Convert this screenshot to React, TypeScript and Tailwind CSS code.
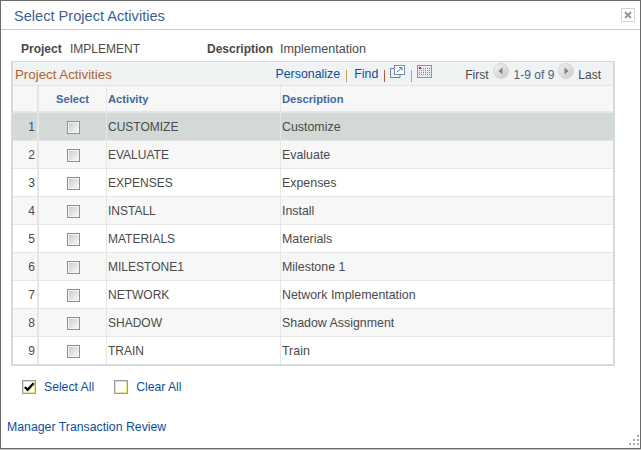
const rows = [
  ["CUSTOMIZE", "Customize"],
  ["EVALUATE", "Evaluate"],
  ["EXPENSES", "Expenses"],
  ["INSTALL", "Install"],
  ["MATERIALS", "Materials"],
  ["MILESTONE1", "Milestone 1"],
  ["NETWORK", "Network Implementation"],
  ["SHADOW", "Shadow Assignment"],
  ["TRAIN", "Train"],
];

function RowCheck() {
  return <div className="w-[13px] h-[13px] mt-[1px] ml-[2px] border border-[#909090] shadow-[inset_0_0_0_1px_#f4f4f4] bg-gradient-to-br from-[#c6caca] to-[#fbfbfb]" />;
}

function NavArrow({ dir }: { dir: "left" | "right" }) {
  return (
    <svg width="16" height="16" viewBox="0 0 16 16" className="mb-[5px]">
      <defs>
        <linearGradient id={`nav-${dir}`} x1="0" y1="0" x2="1" y2="1">
          <stop offset="0" stopColor="#f4f4f4" />
          <stop offset="1" stopColor="#c8c8c8" />
        </linearGradient>
      </defs>
      <circle cx="8" cy="8" r="7.5" fill={`url(#nav-${dir})`} stroke="#d4d4d4" />
      <path d={dir === "left" ? "M5.5 8 L9.5 4.5 V11.5 Z" : "M10.5 8 L6.5 4.5 V11.5 Z"} fill="#808080" />
    </svg>
  );
}

export default function App() {
  return (
    <div className="relative w-[641px] h-[450px] bg-[#c4c4c4] overflow-hidden font-['Liberation_Sans',Arial,sans-serif] text-[12px] text-[#4a4a4a]">
      <div className="w-[641px] h-[449px] bg-white border border-[#6b6b6b] flex flex-col">
        {/* title bar */}
        <div className="h-[29px] shrink-0 border-b border-[#c8c8c8] flex items-center justify-between pl-[13px] pr-[5px]">
          <span className="text-[14.6px] text-[#3d5f96] mt-[3px]">Select Project Activities</span>
          <div className="w-[14px] h-[14px] border border-[#d4d4d4] flex items-center justify-center">
            <svg width="8" height="8" viewBox="0 0 8 8">
              <path d="M1 1 L7 7 M7 1 L1 7" stroke="#8a97a3" strokeWidth="1.8" />
            </svg>
          </div>
        </div>

        {/* project info */}
        <div className="h-[31px] shrink-0 flex items-center pl-[20px] pt-[7px]">
          <span className="font-bold w-[49px]">Project</span>
          <span className="w-[137px]">IMPLEMENT</span>
          <span className="font-bold w-[73px]">Description</span>
          <span className="text-[12.6px] mt-[1px]">Implementation</span>
        </div>

        {/* grid */}
        <div className="ml-[10px] w-[604px] h-[305px] shrink-0 border-2 border-[#d6dadc] border-t-[1px] flex flex-col">
          <div className="h-[24px] shrink-0 bg-[#f0f3f4] flex items-end justify-between border-b border-[#e4e4e4]">
            <span className="text-[13.3px] text-[#b0622c] pl-[2px] leading-[16px] mb-[2px]">Project Activities</span>
            <div className="flex items-end text-[#4a4a4a] pb-[1px]">
              <span className="text-[#0b4f9e] text-[12.4px]">Personalize</span>
              <span className="w-[1px] h-[12px] bg-[#c8a24a] ml-[6px] mr-[7px] mb-[2px]" />
              <span className="text-[#0b4f9e] text-[12.4px]">Find</span>
              <span className="w-[1px] h-[12px] bg-[#b5573a] ml-[6px] mr-[5px] mb-[2px]" />
              <svg width="15" height="13" viewBox="0 0 15 13" className="mb-[6px]">
                <path d="M0.5 3.5 H4 M0.5 3.5 V12.5 H10 V10" fill="none" stroke="#6f7f8f" />
                <rect x="4.5" y="0.5" width="10" height="9" fill="#fff" stroke="#6f90b8" />
                <path d="M7 7 L11.5 3 M9 2.5 H12 V5.5" fill="none" stroke="#5d6f80" />
              </svg>
              <span className="w-[1px] h-[12px] bg-[#c8a24a] ml-[6px] mr-[5px] mb-[2px]" />
              <svg width="15" height="13" viewBox="0 0 15 13" className="mb-[6px]">
                <rect x="0.5" y="0.5" width="14" height="12" fill="#e8ebf0" stroke="#6f9ad0" />
                <path d="M2 3.5 H13 M2 5.5 H13 M2 7.5 H13 M2 9.5 H13" stroke="#8a8f96" />
                <path d="M3.5 2 V11 M5.5 2 V11 M7.5 2 V11 M9.5 2 V11 M11.5 2 V11" stroke="#e8ebf0" />
                <rect x="2" y="2" width="2" height="2" fill="#e8201c" />
              </svg>
              <span className="w-[33px]" />
              <span>First</span>
              <span className="w-[4px]" />
              <NavArrow dir="left" />
              <span className="w-[5px]" />
              <span className="text-[#4d6076]">1-9 of 9</span>
              <span className="w-[4px]" />
              <NavArrow dir="right" />
              <span className="w-[4px]" />
              <span className="pr-[12px]">Last</span>
            </div>
          </div>

          <div className="h-[27px] shrink-0 flex bg-[#f7f7f7] border-b-2 border-[#e6e6e6] font-bold text-[11.2px] text-[#3d6a9e] items-stretch">
            <div className="w-[26px] shrink-0 border-r-2 border-[#e6e6e6]" />
            <div className="w-[68px] shrink-0 border-r border-[#e6e6e6] flex items-center justify-center pt-[1px]">Select</div>
            <div className="w-[174px] shrink-0 border-r border-[#e6e6e6] flex items-center pl-[1px] pt-[1px]">Activity</div>
            <div className="flex-1 flex items-center pl-[1px] pt-[1px]">Description</div>
          </div>

          {rows.map(([activity, description], i) => (
            <div
              key={activity}
              className={`shrink-0 flex items-stretch ${i === 0 ? "bg-[#d3d9d7]" : i % 2 === 1 ? "bg-[#f7f7f7]" : "bg-white"} ${i === 8 ? "h-[27px]" : "h-[28px] border-b border-[#e6e6e6]"}`}
            >
              <div className="w-[26px] shrink-0 border-r-2 border-[#e6e6e6] flex items-center justify-end pr-[2px]">{i + 1}</div>
              <div className="w-[68px] shrink-0 border-r border-[#e6e6e6] flex items-center justify-center">
                <RowCheck />
              </div>
              <div className="w-[174px] shrink-0 border-r border-[#e6e6e6] flex items-center pl-[1px]">{activity}</div>
              <div className="flex-1 flex items-center pl-[1px] pt-[1px] text-[12.4px]">{description}</div>
            </div>
          ))}
        </div>

        {/* select / clear */}
        <div className="h-[41px] shrink-0 flex items-center pl-[21px] text-[#0b4f9e] text-[12.2px]">
          <div className="w-[14px] h-[14px] border border-[#9a9a9a] shadow-[inset_0_0_0_1px_#e8e68c] flex items-center justify-center bg-white">
            <svg width="13" height="12" viewBox="0 0 13 12">
              <path d="M2 6 L5 9 L11.5 2" fill="none" stroke="#000" strokeWidth="2.6" />
            </svg>
          </div>
          <span className="ml-[8px] mt-[1px]">Select All</span>
          <div className="ml-[20px] w-[14px] h-[14px] border border-[#9a9a9a] shadow-[inset_0_0_0_1px_#e8e68c] bg-white" />
          <span className="ml-[8px] mt-[1px]">Clear All</span>
        </div>

        <div className="pl-[6px] mt-[11px] text-[#0b4f9e] text-[12.3px]">Manager Transaction Review</div>
      </div>

      {/* resize grip */}
      <svg width="10" height="10" viewBox="0 0 10 10" className="absolute right-[2px] bottom-[5px]">
        <path d="M8 0 h2 v2 h-2z M4 4 h2 v2 h-2z M8 4 h2 v2 h-2z M0 8 h2 v2 h-2z M4 8 h2 v2 h-2z M8 8 h2 v2 h-2z" fill="#a8a8a8" />
      </svg>
    </div>
  );
}
